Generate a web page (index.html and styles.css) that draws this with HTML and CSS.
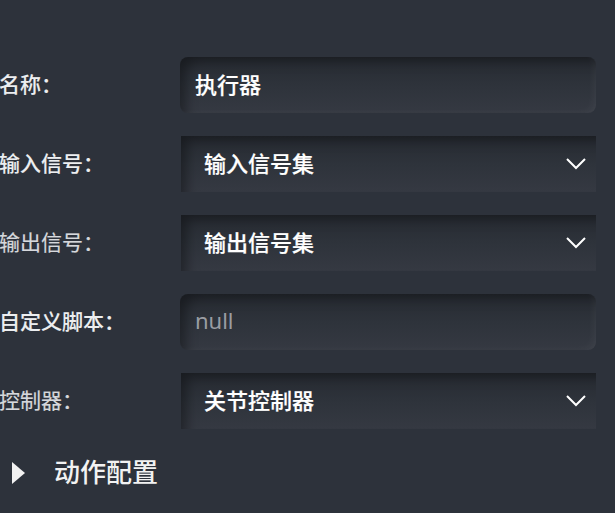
FILE: index.html
```html
<!DOCTYPE html>
<html lang="zh">
<head>
<meta charset="utf-8">
<link rel="stylesheet" href="styles.css">
</head>
<body>
<div class="form">
  <div class="row">
    <label class="label">名称：</label>
    <div class="field input"><span class="value">执行器</span></div>
  </div>
  <div class="row">
    <label class="label">输入信号：</label>
    <div class="field select"><span class="value">输入信号集</span>
      <svg class="chev" width="22" height="14" viewBox="0 0 22 14"><path d="M2 2 L11 11 L20 2" fill="none" stroke="#ffffff" stroke-width="2"/></svg>
    </div>
  </div>
  <div class="row">
    <label class="label dim">输出信号：</label>
    <div class="field select"><span class="value">输出信号集</span>
      <svg class="chev" width="22" height="14" viewBox="0 0 22 14"><path d="M2 2 L11 11 L20 2" fill="none" stroke="#ffffff" stroke-width="2"/></svg>
    </div>
  </div>
  <div class="row">
    <label class="label">自定义脚本：</label>
    <div class="field input"><span class="value placeholder">null</span></div>
  </div>
  <div class="row">
    <label class="label dim">控制器：</label>
    <div class="field select"><span class="value">关节控制器</span>
      <svg class="chev" width="22" height="14" viewBox="0 0 22 14"><path d="M2 2 L11 11 L20 2" fill="none" stroke="#ffffff" stroke-width="2"/></svg>
    </div>
  </div>
  <div class="section">
    <svg class="tri" width="16" height="24" viewBox="0 0 16 24"><path d="M1 1 L14 12 L1 23 Z" fill="#f2f2f2"/></svg>
    <span class="section-title">动作配置</span>
  </div>
</div>
</body>
</html>
```
FILE: styles.css
```css
html, body {
  margin: 0;
  padding: 0;
  background: #2d323b;
  width: 615px;
  height: 513px;
  overflow: hidden;
  font-family: "Noto Sans CJK SC", "Noto Sans", sans-serif;
}
.form {
  display: flex;
  flex-direction: column;
  gap: 23px;
  padding-top: 57px;
  width: 596px;
}
.row {
  display: grid;
  grid-template-columns: 180px 1fr;
  align-items: center;
  height: 56px;
}
.label {
  font-size: 21px;
  font-weight: 500;
  color: #eceef0;
  margin-left: -1px;
  line-height: 1;
  padding-bottom: 4px;
  white-space: nowrap;
  -webkit-text-stroke: 0.1px currentColor;
}
.label.dim {
  color: #d6d8dc;
  font-weight: 400;
  -webkit-text-stroke: 0.2px currentColor;
}
.field {
  height: 56px;
  display: flex;
  align-items: center;
  box-sizing: border-box;
  padding-bottom: 4px;
  background: linear-gradient(180deg, #262a31 0%, #2e333b 50%, #353942 100%);
}
.input {
  border-radius: 8px;
  padding-left: 15px;
  box-shadow: inset 10px 8px 12px -4px rgba(0,0,0,0.35), inset -6px -3px 8px -4px rgba(255,255,255,0.05);
}
.select {
  margin-left: 1px;
  padding-left: 23px;
  padding-right: 9px;
  justify-content: space-between;
  box-shadow: inset 10px 8px 12px -4px rgba(0,0,0,0.35);
}
.value {
  font-size: 22px;
  font-weight: 500;
  color: #ffffff;
  line-height: 1;
  -webkit-text-stroke: 0.2px currentColor;
}
.value.placeholder {
  color: #9a9da3;
  font-weight: 400;
  font-family: "Noto Sans", sans-serif;
  -webkit-text-stroke: 0;
}
.chev {
  display: block;
  margin-top: 4px;
}
.section {
  display: flex;
  align-items: center;
  height: 30px;
  margin-top: 6px;
  padding-left: 11px;
}
.tri {
  display: block;
}
.section-title {
  margin-left: 27px;
  font-size: 26px;
  font-weight: 500;
  color: #f2f2f2;
  line-height: 1;
  padding-bottom: 4px;
}
```
